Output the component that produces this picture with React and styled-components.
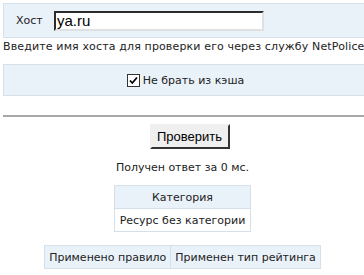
import styled, { createGlobalStyle } from 'styled-components';

const Global = createGlobalStyle`
  body {
    margin: 0;
    padding: 3px 0 0 3px;
    background: #fff;
    font-family: "DejaVu Sans", Verdana, sans-serif;
    font-size: 11px;
    color: #222;
    overflow: hidden;
  }
`;

const Page = styled.div`
  width: 361px;
`;

const Panel = styled.div`
  background: #e9f1f9;
  border: 1px solid #d5e0ea;
  display: flex;
  align-items: center;
  justify-content: ${(p) => (p.center ? 'center' : 'flex-start')};
  height: ${(p) => p.h}px;
  box-sizing: border-box;
  margin-right: -10px;
`;

const Label = styled.span`
  margin-left: 12px;
  width: 38px;
`;

const Input = styled.input`
  width: 210px;
  height: 20px;
  box-sizing: border-box;
  border: 2px inset #e0e0e0;
  border-top-color: #808080;
  border-left-color: #808080;
  font-family: "Liberation Sans", Arial, sans-serif;
  font-size: 15px;
  padding: 0 1px;
  outline: none;
  color: #000;
`;

const Hint = styled.div`
  margin: 2px 0 11px;
  white-space: nowrap;
  letter-spacing: 0.14px;
`;

const Check = styled.label`
  display: flex;
  align-items: center;
  gap: 3px;
  margin-left: -6px;
`;

const Box = styled.span`
  width: 11px;
  height: 11px;
  border: 1px solid #333;
  background: #fff;
  display: flex;
  align-items: center;
  justify-content: center;
`;

const Rule = styled.hr`
  margin: 19px -10px 0 0;
  border: none;
  border-top: 2px solid #a8a8a8;
`;

const Center = styled.div`
  display: flex;
  flex-direction: column;
  align-items: center;
  padding-right: 2px;
`;

const Button = styled.button`
  margin-top: 7px;
  margin-left: 14px;
  width: 80px;
  height: 25px;
  background: #efefef;
  border: 2px outset #f0f0f0;
  border-right-color: #888;
  border-bottom-color: #888;
  font-family: "Liberation Sans", Arial, sans-serif;
  font-size: 13px;
  color: #000;
  padding: 0;
`;

const Info = styled.div`
  margin-top: 12px;
`;

const Table = styled.table`
  border-collapse: collapse;
  margin-top: ${(p) => p.mt}px;
`;

const Cell = styled.td`
  border: 1px solid #d5e0ea;
  background: ${(p) => (p.head ? '#e9f1f9' : '#fff')};
  padding: 0 ${(p) => p.px || 5}px;
  height: 22px;
  text-align: center;
  white-space: nowrap;
`;

export default function App() {
  return (
    <Page>
      <Global />
      <Panel h={35}>
        <Label>Хост</Label>
        <Input defaultValue="ya.ru" />
      </Panel>
      <Hint>Введите имя хоста для проверки его через службу NetPolice</Hint>
      <Panel h={32} center>
        <Check>
          <Box>
            <svg width="9" height="9" viewBox="0 0 9 9">
              <path d="M1 4.5 L3.3 7 L8 1.5" stroke="#000" strokeWidth="1.8" fill="none" />
            </svg>
          </Box>
          Не брать из кэша
        </Check>
      </Panel>
      <Rule />
      <Center>
        <Button>Проверить</Button>
        <Info>Получен ответ за 0 мс.</Info>
        <Table mt={11}>
          <tbody>
            <tr><Cell head>Категория</Cell></tr>
            <tr><Cell>Ресурс без категории</Cell></tr>
          </tbody>
        </Table>
        <Table mt={13}>
          <tbody>
            <tr>
              <Cell head px={4}>Применено правило</Cell>
              <Cell head px={4}>Применен тип рейтинга</Cell>
            </tr>
          </tbody>
        </Table>
      </Center>
    </Page>
  );
}
